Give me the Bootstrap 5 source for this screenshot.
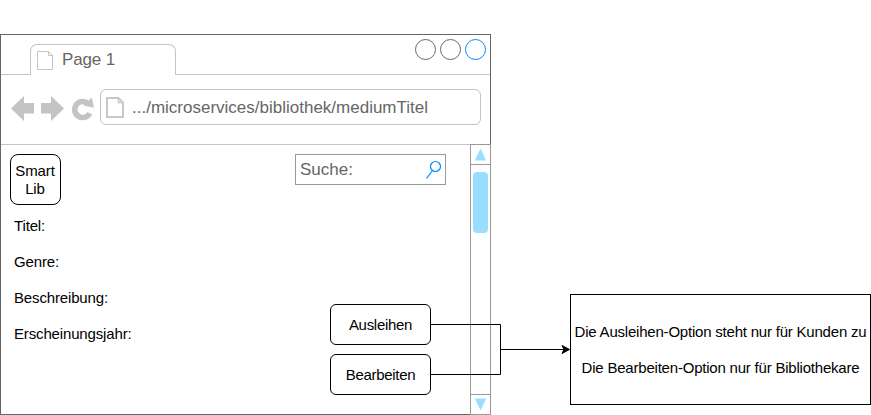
<!DOCTYPE html>
<html lang="de">
<head>
<meta charset="utf-8">
<meta name="viewport" content="width=device-width, initial-scale=1">
<title>Smart Lib – Medium</title>
<link href="https://cdn.jsdelivr.net/npm/bootstrap@5.3.0/dist/css/bootstrap.min.css" rel="stylesheet">
<style>
body { font-family: "Liberation Sans", Arial, sans-serif; font-size: 15px; line-height: 18px; color: #000; background: #fff; }
svg { display: block; flex: none; }
.board { width: 871px; height: 415px; padding-top: 34px; overflow: hidden; }
.browser { width: 491px; height: 381px; border: 1px solid #666; }
.chrome-text { font-size: 17px; line-height: 20px; color: #666; }
.tab-strip { height: 40px; border-bottom: 1px solid #c4c4c4; padding: 0 3px 0 29px; }
.page-tab { width: 146px; height: 31px; margin: 9px 0 -1px; border: 1px solid #c4c4c4; border-bottom: 0; border-radius: 7px 7px 0 0; background: #fff; padding: 6px 0 0 6px; gap: 8px; }
.tab-label { margin-top: -1px; letter-spacing: -.15px; }
.tool-row { height: 70px; border-bottom: 1px solid #c4c4c4; padding: 14px 9px 0 9px; }
.address { width: 381px; height: 36px; border: 1px solid #c4c4c4; border-radius: 6px; padding-left: 5px; gap: 8px; }
.url { padding-top: 2px; }
.viewport-row { height: 269px; }
.page-body { width: 469px; padding: 9px 0 0 9px; }
.brand { width: 51px; height: 51px; border: 1px solid #000; border-radius: 8px; letter-spacing: -.1px; padding-right: 1px; }
.search { width: 151px; height: 31px; margin-right: 24px; border: 1px solid #999; padding: 0 2px 0 4px; }
.fields { padding: 12px 0 0 4px; gap: 18px; letter-spacing: -.15px; }
.actions { padding: 0 39px 0 0; gap: 9px; margin-top: 99px; }
.action-btn { width: 101px; height: 41px; border: 1px solid #000; border-radius: 6px; background: #fff; color: #000; font-size: 15px; line-height: 18px; letter-spacing: -.3px; }
.scroller { width: 21px; height: 271px; margin: -1px -1px -1px 0; border: 1px solid #999; background: #fff; }
.scroll-end { height: 20px; }
.scroll-end.up { border-bottom: 1px solid #999; }
.scroll-end.down { border-top: 1px solid #999; }
.thumb { width: 15px; height: 61px; margin-top: 7px; background: #9df; border-radius: 4px; }
.note { width: 301px; height: 111px; margin: 260px 0 0 79px; border: 1px solid #000; gap: 18px; white-space: nowrap; letter-spacing: -.21px; }
.connector { left: 0; top: 0; pointer-events: none; }
</style>
</head>
<body>
<main class="board position-relative d-flex align-items-start">
  <section class="browser flex-shrink-0 d-flex flex-column">
    <div class="tab-strip d-flex justify-content-between">
      <div class="page-tab d-flex chrome-text">
        <svg width="17" height="20" viewBox="0 0 17 20" fill="none" stroke="#c4c4c4"><path d="M.5 .5h11l4 4v14H.5zM11.5 .5v4h4"/></svg>
        <span class="tab-label">Page 1</span>
      </div>
      <svg width="73" height="30" viewBox="0 0 73 30" fill="none" stroke="#666"><circle cx="11.5" cy="14.5" r="10"/><circle cx="36.5" cy="14.5" r="10"/><circle cx="61.5" cy="14.5" r="10" stroke="#08f"/></svg>
    </div>
    <div class="tool-row d-flex justify-content-between">
      <svg width="86" height="40" viewBox="10 89 86 40" fill="#c4c4c4">
        <path d="M11 108.500 24 96v7h10v10.500H24v7.500zM64 108.500 51 96v7H41v10.500h10v7.500z"/>
        <path d="M88.500 104A8 8 0 1 0 89.800 113.200" fill="none" stroke="#c4c4c4" stroke-width="5.600"/>
        <path d="M91.800 97.500 94 107.800 83.500 105.500z"/>
      </svg>
      <div class="address d-flex align-items-center chrome-text">
        <svg width="18" height="21" viewBox="0 0 18 21" fill="none" stroke="#c8c8c8" stroke-width="2"><path d="M1 1h11.500l4.500 4.500V20H1z"/><path d="M12.500 1v4.500H17" stroke-width="1.500"/></svg>
        <span class="url">.../microservices/bibliothek/mediumTitel</span>
      </div>
    </div>
    <div class="viewport-row d-flex">
      <div class="page-body d-flex flex-column">
        <div class="d-flex justify-content-between align-items-start">
          <div class="brand d-flex align-items-center text-center justify-content-center">Smart<br>Lib</div>
          <div class="search d-flex align-items-center justify-content-between chrome-text">
            <span>Suche:</span>
            <svg width="18" height="20" viewBox="0 0 18 20" fill="none" stroke="#08f" stroke-width="1.2"><circle cx="10.500" cy="6.500" r="5"/><path d="M7.500 10.500 1.500 18.500"/></svg>
          </div>
        </div>
        <div class="d-flex justify-content-between align-items-start">
          <div class="fields d-flex flex-column">
            <span>Titel:</span><span>Genre:</span><span>Beschreibung:</span><span>Erscheinungsjahr:</span>
          </div>
          <div class="actions d-flex flex-column">
            <button class="action-btn p-0" type="button">Ausleihen</button>
            <button class="action-btn p-0" type="button">Bearbeiten</button>
          </div>
        </div>
      </div>
      <div class="scroller flex-shrink-0 d-flex flex-column align-items-center">
        <div class="scroll-end up w-100"><svg width="19" height="19" viewBox="0 0 19 19" fill="#9df"><path d="M9.500 3.500 15.200 15.500H3.800z"/></svg></div>
        <div class="thumb"></div>
        <div class="scroll-end down w-100 mt-auto"><svg width="19" height="19" viewBox="0 0 19 19" fill="#9df"><path d="M9.500 15.500 15.200 3.500H3.800z"/></svg></div>
      </div>
    </div>
  </section>
  <aside class="note flex-shrink-0 d-flex flex-column align-items-center justify-content-center">
    <span>Die Ausleihen-Option steht nur für Kunden zu</span>
    <span>Die Bearbeiten-Option nur für Bibliothekare</span>
  </aside>
  <svg class="connector position-absolute" width="871" height="415" viewBox="0 0 871 415" fill="none" stroke="#000"><path d="M430.500 324.500h70v50h-70M500.500 349.500H566"/><path d="M569.500 349.500l-7.500 4 2-4-2-4z" fill="#000"/></svg>
</main>
<script src="https://cdn.jsdelivr.net/npm/bootstrap@5.3.0/dist/js/bootstrap.bundle.min.js"></script>
</body>
</html>
